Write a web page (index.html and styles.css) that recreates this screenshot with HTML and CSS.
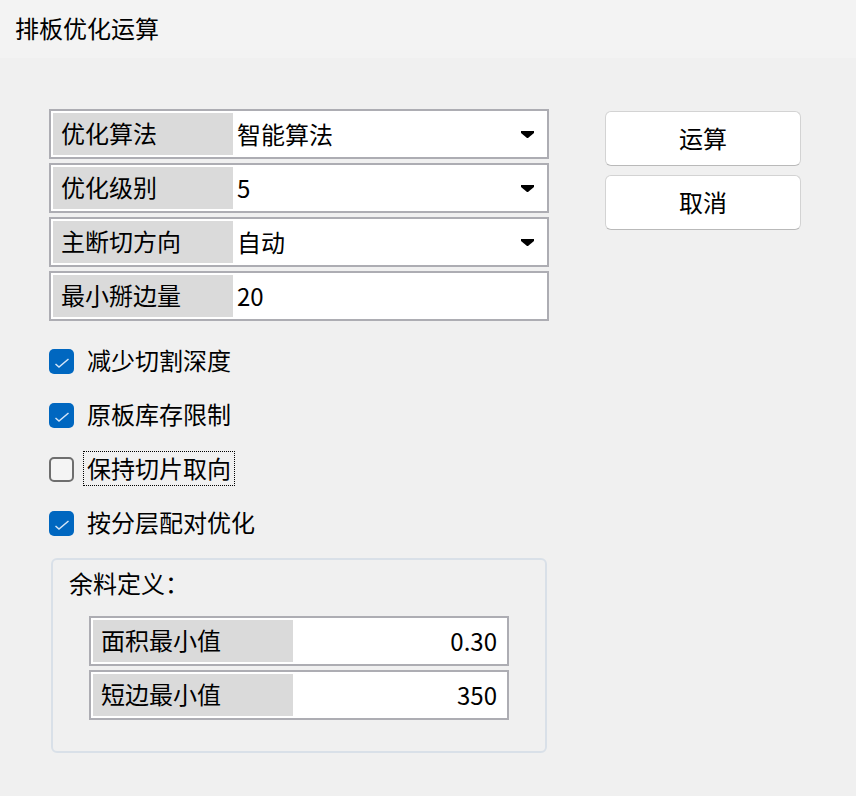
FILE: index.html
```html
<!DOCTYPE html>
<html lang="zh-CN">
<head>
    <meta charset="UTF-8">
    <title>排板优化运算</title>
    <link rel="stylesheet" href="styles.css">
</head>
<body>
    <div class="window">
        <div class="titlebar">排板优化运算</div>

        <div class="content">
            <div class="left">
                <div class="fields">
                    <div class="field">
                        <div class="label">优化算法</div>
                        <div class="value">智能算法</div>
                        <svg class="arrow" width="13" height="7" viewBox="0 0 13 7"><polygon points="0,0 13,0 13,2 7,7 6,7 0,2"/></svg>
                    </div>
                    <div class="field">
                        <div class="label">优化级别</div>
                        <div class="value">5</div>
                        <svg class="arrow" width="13" height="7" viewBox="0 0 13 7"><polygon points="0,0 13,0 13,2 7,7 6,7 0,2"/></svg>
                    </div>
                    <div class="field">
                        <div class="label">主断切方向</div>
                        <div class="value">自动</div>
                        <svg class="arrow" width="13" height="7" viewBox="0 0 13 7"><polygon points="0,0 13,0 13,2 7,7 6,7 0,2"/></svg>
                    </div>
                    <div class="field">
                        <div class="label">最小掰边量</div>
                        <div class="value">20</div>
                    </div>
                </div>

                <div class="checks">
                    <div class="check-row">
                        <span class="box checked"><svg width="25" height="25" viewBox="0 0 25 25"><polyline points="6.5,15 10,18 19.5,10"/></svg></span>
                        <span class="text">减少切割深度</span>
                    </div>
                    <div class="check-row">
                        <span class="box checked"><svg width="25" height="25" viewBox="0 0 25 25"><polyline points="6.5,15 10,18 19.5,10"/></svg></span>
                        <span class="text">原板库存限制</span>
                    </div>
                    <div class="check-row">
                        <span class="box"></span>
                        <span class="text focused">保持切片取向</span>
                    </div>
                    <div class="check-row">
                        <span class="box checked"><svg width="25" height="25" viewBox="0 0 25 25"><polyline points="6.5,15 10,18 19.5,10"/></svg></span>
                        <span class="text">按分层配对优化</span>
                    </div>
                </div>

                <div class="group">
                    <div class="group-title">余料定义：</div>
                    <div class="field small">
                        <div class="label">面积最小值</div>
                        <div class="value num">0.30</div>
                    </div>
                    <div class="field small">
                        <div class="label">短边最小值</div>
                        <div class="value num">350</div>
                    </div>
                </div>
            </div>

            <div class="buttons">
                <button class="btn">运算</button>
                <button class="btn">取消</button>
            </div>
        </div>
    </div>
</body>
</html>
```

FILE: styles.css
```css
body {
    margin: 0;
    background-color: #f0f0f0;
    font-family: "Noto Sans CJK SC", "Noto Sans", sans-serif;
    font-size: 24px;
    color: #000;
}

.window {
    width: 856px;
    height: 796px;
    background-color: #f0f0f0;
}

.titlebar {
    height: 58px;
    line-height: 55px;
    padding-left: 15px;
    background-color: #f3f3f3;
}

.content {
    display: flex;
    padding: 51px 0 0 49px;
}

.left {
    width: 500px;
}

.fields {
    display: flex;
    flex-direction: column;
    gap: 4px;
}

.field {
    display: flex;
    align-items: center;
    height: 50px;
    box-sizing: border-box;
    border: 2px solid #adadb3;
    padding: 2px;
    background-color: #fff;
}

.label {
    width: 172px;
    height: 42px;
    line-height: 40px;
    padding-left: 8px;
    background-color: #dadada;
}

.value {
    flex: 1;
    padding-left: 4px;
    line-height: 40px;
}

.arrow {
    margin-right: 11px;
    fill: #000;
}

.checks {
    margin-top: 13px;
}

.check-row {
    display: flex;
    align-items: center;
    height: 54px;
}

.box {
    width: 25px;
    height: 25px;
    box-sizing: border-box;
    border: 2px solid #6e6e6e;
    border-radius: 5px;
    background-color: #f4f4f4;
    margin-right: 9px;
}

.box.checked {
    border: none;
    background-color: #0067c0;
}

.box svg {
    display: block;
}

.box polyline {
    fill: none;
    stroke: #d4e5f7;
    stroke-width: 1.5;
}

.text {
    line-height: 31px;
    padding: 0 3px 2px 3px;
    margin-bottom: 2px;
    border: 1px dotted transparent;
}

.text.focused {
    border-color: #000;
}

.group {
    margin-top: 8px;
    margin-left: 2px;
    width: 496px;
    height: 195px;
    box-sizing: border-box;
    border: 2px solid #d9e0e8;
    border-radius: 6px;
    padding: 10px 36px 0 36px;
}

.group-title {
    line-height: 26px;
    margin-left: -20px;
    margin-bottom: 20px;
}

.field.small {
    width: 420px;
    margin-bottom: 4px;
}

.field.small .label {
    width: 192px;
}

.num {
    text-align: right;
    padding-right: 8px;
}

.buttons {
    display: flex;
    flex-direction: column;
    gap: 9px;
    margin-left: 56px;
    margin-top: 2px;
}

.btn {
    width: 196px;
    height: 55px;
    padding-bottom: 3px;
    background-color: #fff;
    border: 1px solid #d3d3d3;
    border-bottom-color: #b9b9b9;
    border-radius: 6px;
    font-family: "Noto Sans CJK SC", "Noto Sans", sans-serif;
    font-size: 24px;
    color: #000;
}
```
